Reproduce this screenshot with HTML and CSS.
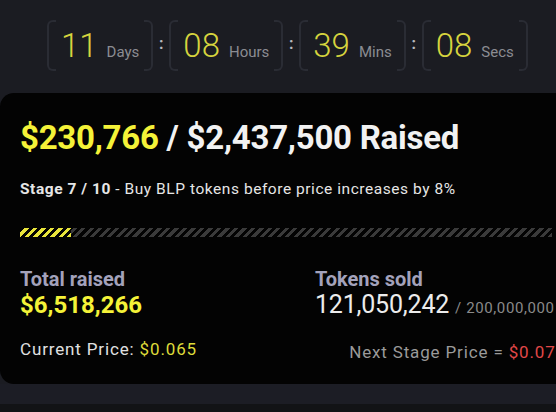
FILE: index.html
```html
<!DOCTYPE html>
<html>
<head>
<meta charset="utf-8">
<link rel="stylesheet" href="styles.css">
</head>
<body>
<div class="page">
  <div class="countdown">
    <div class="unit"><span class="num">11</span><span class="lbl">Days</span></div>
    <div class="sep">:</div>
    <div class="unit"><span class="num">08</span><span class="lbl">Hours</span></div>
    <div class="sep">:</div>
    <div class="unit"><span class="num">39</span><span class="lbl">Mins</span></div>
    <div class="sep">:</div>
    <div class="unit"><span class="num">08</span><span class="lbl">Secs</span></div>
  </div>
  <div class="card">
    <h1 class="raised"><span class="yellow">$230,766</span> / $2,437,500 Raised</h1>
    <p class="stage"><b>Stage 7 / 10</b> - Buy BLP tokens before price increases by 8%</p>
    <div class="bar"><div class="fill" style="width:9.6%"></div></div>
    <div class="stats">
      <div class="col">
        <div class="stat-label">Total raised</div>
        <div class="stat-value yellow">$6,518,266</div>
        <div class="price">Current Price: <span class="yellow-soft">$0.065</span></div>
      </div>
      <div class="col right">
        <div class="stat-label">Tokens sold</div>
        <div class="tokens">121,050,242 <span class="of">/ 200,000,000</span></div>
        <div class="price next">Next Stage Price = <span class="red">$0.07</span></div>
      </div>
    </div>
  </div>
  <div class="band"></div>
</div>
</body>
</html>
```
FILE: styles.css
```css
html, body {
  margin: 0;
  padding: 0;
}
body {
  background: #121316;
  font-family: "Roboto", "Liberation Sans", sans-serif;
  width: 556px;
  height: 412px;
  overflow: hidden;
}
.page {
  background: #1b1c22;
  height: 404px;
  overflow: hidden;
  display: flex;
  flex-direction: column;
}
.countdown {
  display: flex;
  align-items: center;
  margin: 20px 0 0 47px;
}
.unit {
  position: relative;
  min-width: 105px;
  height: 51px;
  box-sizing: border-box;
  display: flex;
  align-items: baseline;
  justify-content: center;
  gap: 9px;
  padding: 6px 14px 0;
}
.unit::before,
.unit::after {
  content: "";
  position: absolute;
  top: 0;
  bottom: 0;
  width: 7px;
  border: 2px solid #2a2c34;
}
.unit::before {
  left: 0;
  border-right: none;
  border-radius: 6px 0 0 6px;
}
.unit::after {
  right: 0;
  border-left: none;
  border-radius: 0 6px 6px 0;
}
.num {
  font-family: "Roboto", sans-serif;
  font-weight: 300;
  font-size: 33px;
  color: #d6d43e;
  line-height: 40px;
}
.lbl {
  font-size: 15px;
  color: #8b8c92;
}
.sep {
  width: 16px;
  text-align: center;
  color: #b8b9be;
  font-size: 16px;
  font-weight: bold;
  margin-top: -4px;
}
.card {
  margin-top: 22px;
  width: 600px;
  height: 291px;
  box-sizing: border-box;
  background: #030303;
  border-radius: 14px;
  padding: 24px 48px 0 20px;
  color: #f2f2f2;
}
.raised {
  margin: 0;
  font-size: 33px;
  font-weight: 700;
  line-height: 42px;
  letter-spacing: -0.25px;
}
.yellow {
  color: #f4f238;
}
.yellow-soft {
  color: #dedb3a;
}
.stage {
  margin: 20px 0 0;
  font-size: 15.5px;
  letter-spacing: 0.55px;
  color: #e6e6e6;
  line-height: 20px;
}
.stage b {
  font-weight: 700;
}
.bar {
  margin-top: 29px;
  height: 9px;
  background: repeating-linear-gradient(-45deg, #3a3a3a 0 3px, transparent 3px 6px);
}
.fill {
  height: 100%;
  background: repeating-linear-gradient(-45deg, #e8e43a 0 3px, #030303 3px 6px);
}
.stats {
  display: grid;
  grid-template-columns: 295px 1fr;
  margin-top: 30px;
}
.col {
  display: flex;
  flex-direction: column;
}
.col.right {
  align-items: flex-start;
}
.stat-label {
  font-size: 20px;
  font-weight: 700;
  color: #a3a2bb;
  line-height: 24px;
}
.stat-value {
  font-size: 24px;
  font-weight: 700;
  line-height: 28px;
}
.tokens {
  font-size: 25px;
  font-weight: 400;
  color: #ececec;
  line-height: 28px;
  white-space: nowrap;
  letter-spacing: -0.2px;
}
.of {
  font-size: 15px;
  letter-spacing: 0.6px;
  color: #8a8a8a;
}
.price {
  margin-top: 20px;
  font-size: 17px;
  letter-spacing: 0.85px;
  color: #e0e0e0;
}
.price.next {
  align-self: flex-end;
  margin-right: -1px;
  color: #9a9a9a;
}
.red {
  color: #e04848;
}
.band {
  flex: 1;
  background: #1c1d25;
}
```
